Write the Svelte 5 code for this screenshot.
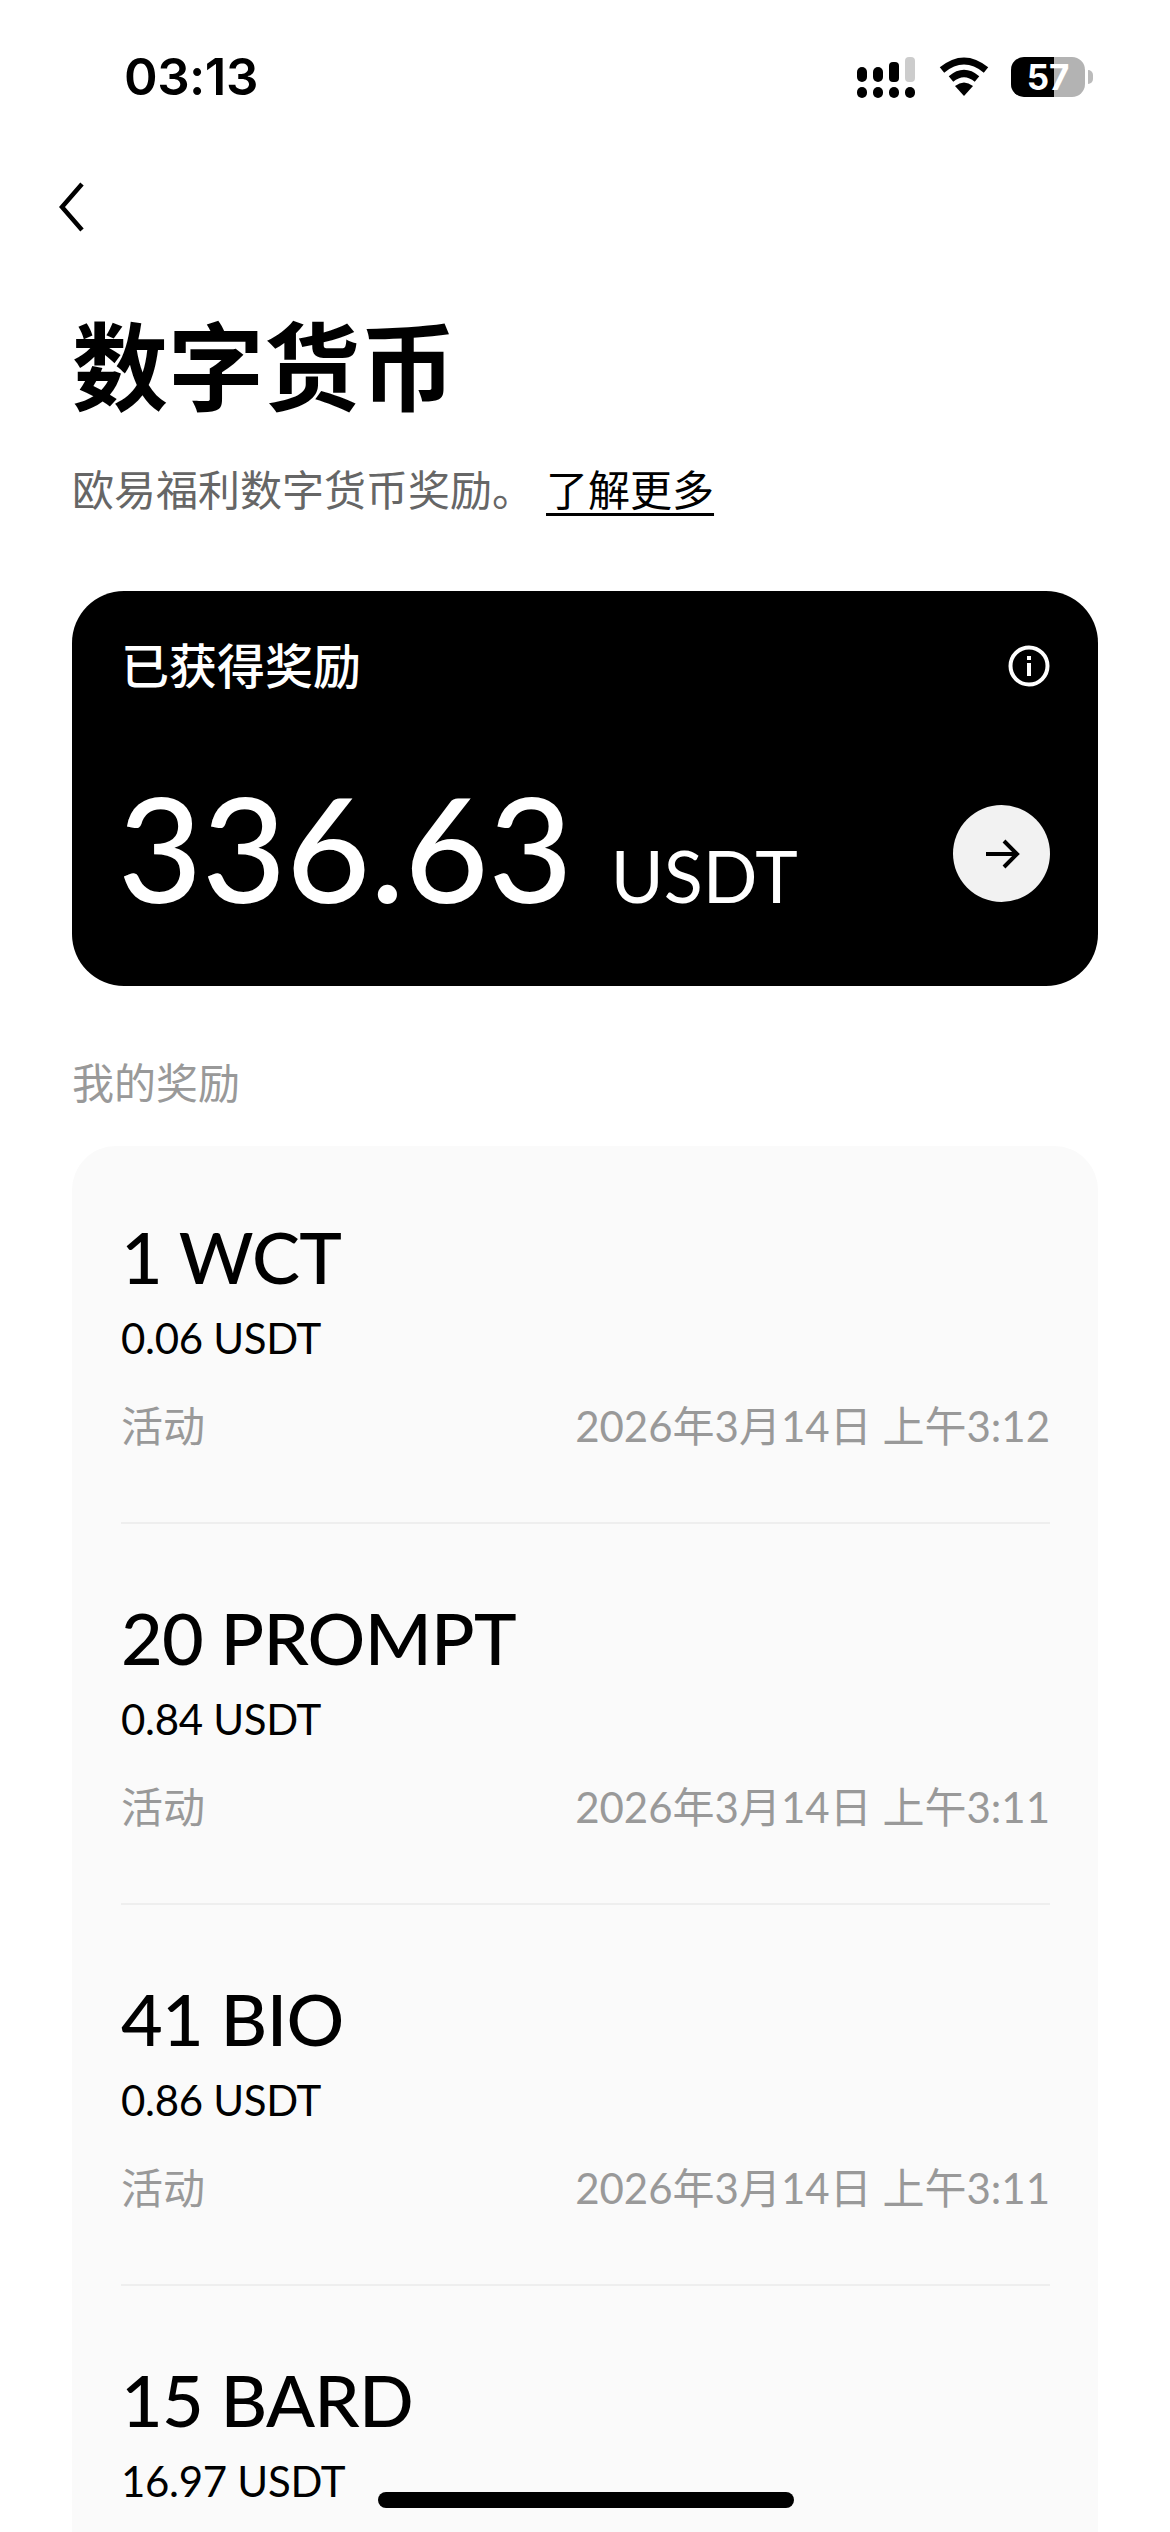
<script>
  const rows = [
    { amount: '1 WCT', usdt: '0.06 USDT', date: '2026年3月14日 上午3:12' },
    { amount: '20 PROMPT', usdt: '0.84 USDT', date: '2026年3月14日 上午3:11' },
    { amount: '41 BIO', usdt: '0.86 USDT', date: '2026年3月14日 上午3:11' },
    { amount: '15 BARD', usdt: '16.97 USDT', date: '' }
  ];
</script>

<div class="page">
  <div class="status">
    <span class="time">03:13</span>
    <div class="icons">
      <svg width="60" height="42" viewBox="0 0 60 42" class="sig">
        <rect x="1" y="10" width="10" height="15" rx="5" fill="#000"/>
        <rect x="17" y="10" width="10" height="15" rx="5" fill="#000"/>
        <rect x="33" y="5" width="10" height="20" rx="4" fill="#000"/>
        <rect x="49" y="0" width="10" height="25" rx="4" fill="#ccc"/>
        <rect x="1" y="30" width="10" height="11" rx="5" fill="#000"/>
        <rect x="17" y="30" width="10" height="11" rx="5" fill="#000"/>
        <rect x="33" y="30" width="10" height="11" rx="5" fill="#000"/>
        <rect x="49" y="30" width="10" height="11" rx="5" fill="#000"/>
      </svg>
      <svg width="52" height="40" viewBox="0 0 52 40" class="wifi">
        <path d="M4 13 Q26 -5 48 13" fill="none" stroke="#000" stroke-width="7"/>
        <path d="M13 22 Q26 11 39 22" fill="none" stroke="#000" stroke-width="7"/>
        <path d="M17 29 Q26 22 35 29 L26 39 Z" fill="#000"/>
      </svg>
      <div class="batt">
        <div class="fill"></div>
        <span class="pct">57</span>
        <div class="nub"></div>
      </div>
    </div>
  </div>

  <div class="nav">
    <svg width="26" height="52" viewBox="0 0 26 52">
      <path d="M23 3 L3 26 L23 49" fill="none" stroke="#000" stroke-width="4.5"/>
    </svg>
  </div>

  <main class="content">
    <h1>数字货币</h1>
    <p class="sub">欧易福利数字货币奖励。<span class="more">了解更多</span></p>

    <section class="hero">
      <div class="hero-top">
        <span class="hero-label">已获得奖励</span>
        <svg width="42" height="42" viewBox="0 0 42 42">
          <circle cx="21" cy="21" r="18.5" fill="none" stroke="#fff" stroke-width="4"/>
          <rect x="19" y="18" width="4" height="13" fill="#fff"/>
          <rect x="19" y="11" width="4" height="4" fill="#fff"/>
        </svg>
      </div>
      <div class="hero-bottom">
        <div class="sum"><span class="big">336.63</span><span class="unit">USDT</span></div>
        <div class="go">
          <svg width="36" height="32" viewBox="0 0 36 32">
            <path d="M2 16 H33 M20 3 L33 16 L20 29" fill="none" stroke="#000" stroke-width="4"/>
          </svg>
        </div>
      </div>
    </section>

    <div class="section-title">我的奖励</div>

    <section class="list">
      {#each rows as r}
        <article class="row">
          <div class="amount">{r.amount}</div>
          <div class="usdt">{r.usdt}</div>
          {#if r.date}
            <div class="meta"><span>活动</span><span>{r.date}</span></div>
          {/if}
        </article>
      {/each}
    </section>
  </main>

  <div class="home"></div>
</div>

<style>
  :global(body) { margin: 0; background: #fff; }
  .page {
    position: relative;
    width: 1170px;
    height: 2532px;
    overflow: hidden;
    background: #fff;
    color: #000;
    font-family: "Lato", "Noto Sans CJK SC", sans-serif;
  }
  .status {
    height: 156px;
    box-sizing: border-box;
    padding: 48px 85px 0 124px;
    display: flex;
    justify-content: space-between;
    align-items: flex-start;
  }
  .time { font-family: "Inter", sans-serif; font-size: 51px; line-height: 58px; font-weight: 600; letter-spacing: -0.5px; }
  .icons { display: flex; align-items: flex-start; padding-top: 9px; }
  .sig { display: block; margin-right: 22px; }
  .wifi { display: block; margin-right: 21px; }
  .batt {
    position: relative;
    width: 74px;
    height: 40px;
    border-radius: 13px;
    background: #b3b3b3;
    overflow: visible;
  }
  .fill { position: absolute; left: 0; top: 0; bottom: 0; width: 43px; background: #000; border-radius: 13px 0 0 13px; }
  .pct { position: absolute; inset: 0; text-align: center; color: #fff; font-family: "Inter", sans-serif; font-size: 35px; line-height: 40px; font-weight: 700; }
  .nub { position: absolute; right: -8px; top: 13px; width: 5px; height: 14px; background: #bbb; border-radius: 0 7px 7px 0; }
  .nav { height: 110px; padding-left: 59px; box-sizing: border-box; padding-top: 25px; }
  .nav svg { display: block; }
  .content { padding: 0 72px; }
  h1 { margin: 0; font-size: 96px; line-height: 100px; font-weight: 700; padding-top: 50px; }
  .sub { margin: 43px 0 0; font-size: 42px; line-height: 62px; color: #666; }
  .more { color: #000; text-decoration: underline; text-underline-offset: 7px; text-decoration-thickness: 3px; margin-left: 12px; }
  .hero {
    margin-top: 70px;
    height: 395px;
    box-sizing: border-box;
    background: #000;
    border-radius: 52px;
    padding: 46px 48px 0 49px;
    color: #fff;
  }
  .hero-top { display: flex; justify-content: space-between; align-items: center; height: 58px; }
  .hero-label { font-size: 48px; font-weight: 500; line-height: 58px; }
  .hero-bottom { display: flex; justify-content: space-between; align-items: flex-start; margin-top: 77px; }
  .sum { display: flex; align-items: baseline; gap: 38px; margin-left: -3px; }
  .big { font-size: 145px; line-height: 150px; font-weight: 500; }
  .unit { font-size: 72px; font-weight: 400; }
  .go { width: 97px; height: 97px; margin-top: 33px; border-radius: 50%; background: #f2f2f2; display: flex; align-items: center; justify-content: center; }
  .section-title { margin-top: 71px; font-size: 42px; line-height: 52px; color: #999; }
  .list {
    margin-top: 37px;
    background: #fafafa;
    border-radius: 44px;
    padding: 0 48px 0 49px;
  }
  .row { height: 381px; box-sizing: border-box; padding-top: 68px; border-bottom: 2px solid #eee; }
  .row:first-child { height: 378px; padding-top: 65px; }
  .amount { font-size: 72px; line-height: 90px; font-weight: 500; letter-spacing: -0.7px; }
  .usdt { font-size: 42px; line-height: 52px; margin-top: 11px; letter-spacing: -0.3px; }
  .meta { display: flex; justify-content: space-between; margin-top: 34px; font-size: 42px; line-height: 56px; color: #999; }
  .home { position: absolute; left: 378px; top: 2492px; width: 416px; height: 16px; border-radius: 8px; background: #000; }
</style>
